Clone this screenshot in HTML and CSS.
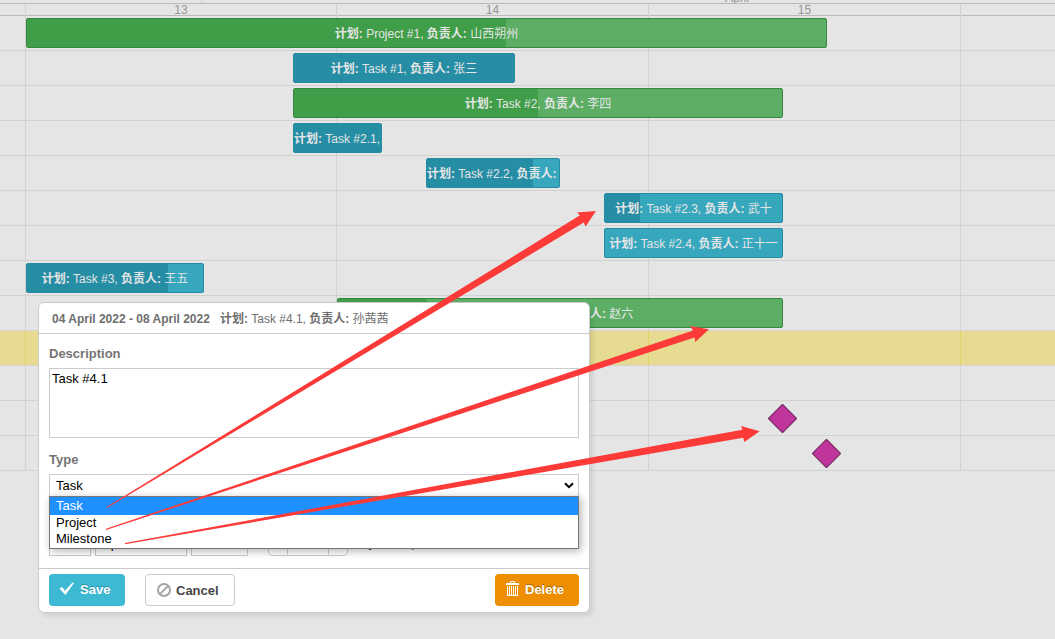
FILE: index.html
```html
<!DOCTYPE html>
<html lang="zh-CN">
<head>
<meta charset="utf-8">
<title>Gantt</title>
<link rel="stylesheet" href="styles.css">
</head>
<body>
<main class="gantt">
  <div class="months"><div class="month"></div><div class="month month-current">April</div></div>
  <div class="days"><div></div><div>13</div><div>14</div><div>15</div><div></div></div>

  <div class="row"><i></i><i></i><i></i><i></i><i></i>
    <div class="bar project" style="left:26px;width:801px"><span class="progress" style="width:479px"></span><span class="text"><b>计划:</b> Project #1, <b>负责人:</b> 山西朔州</span></div></div>
  <div class="row"><i></i><i></i><i></i><i></i><i></i>
    <div class="bar task" style="left:293px;width:222px"><span class="progress" style="width:220px"></span><span class="text"><b>计划:</b> Task #1, <b>负责人:</b> 张三</span></div></div>
  <div class="row"><i></i><i></i><i></i><i></i><i></i>
    <div class="bar project" style="left:293px;width:490px"><span class="progress" style="width:244px"></span><span class="text"><b>计划:</b> Task #2, <b>负责人:</b> 李四</span></div></div>
  <div class="row"><i></i><i></i><i></i><i></i><i></i>
    <div class="bar task clipped" style="left:293px;width:89px"><span class="progress" style="width:87px"></span><span class="text"><b>计划:</b> Task #2.1,</span></div></div>
  <div class="row"><i></i><i></i><i></i><i></i><i></i>
    <div class="bar task clipped" style="left:426px;width:134px"><span class="progress" style="width:106px"></span><span class="text"><b>计划:</b> Task #2.2, <b>负责人:</b></span></div></div>
  <div class="row"><i></i><i></i><i></i><i></i><i></i>
    <div class="bar task" style="left:604px;width:179px"><span class="progress" style="width:35px"></span><span class="text"><b>计划:</b> Task #2.3, <b>负责人:</b> 武十</span></div></div>
  <div class="row"><i></i><i></i><i></i><i></i><i></i>
    <div class="bar task" style="left:604px;width:179px"><span class="text"><b>计划:</b> Task #2.4, <b>负责人:</b> 正十一</span></div></div>
  <div class="row"><i></i><i></i><i></i><i></i><i></i>
    <div class="bar task" style="left:26px;width:178px"><span class="progress" style="width:141px"></span><span class="text"><b>计划:</b> Task #3, <b>负责人:</b> 王五</span></div></div>
  <div class="row"><i></i><i></i><i></i><i></i><i></i>
    <div class="bar project" style="left:337px;width:446px"><span class="progress" style="width:89px"></span><span class="text"><b>计划:</b> Task #4, <b>负责人:</b> 赵六</span></div></div>
  <div class="row selected"><i></i><i></i><i></i><i></i><i></i></div>
  <div class="row"><i></i><i></i><i></i><i></i><i></i></div>
  <div class="row"><i></i><i></i><i></i><i></i><i></i>
    <div class="milestone" style="left:772px"></div></div>
  <div class="row"><i></i><i></i><i></i><i></i><i></i>
    <div class="milestone" style="left:816px"></div></div>
</main>

<form class="lightbox">
  <header class="lb-head"><strong>04 April 2022 - 08 April 2022</strong><span><b>计划:</b> Task #4.1, <b>负责人:</b> 孙茜茜</span></header>
  <div class="lb-body">
    <label class="label" for="desc">Description</label>
    <textarea class="desc" id="desc">Task #4.1</textarea>
    <label class="label label-type" for="type">Type</label>
    <div class="type">
      <select class="field type-select" id="type"><option>Task</option><option>Project</option><option>Milestone</option></select>
      <svg class="chevron" viewBox="0 0 10 7"><path d="M1 1.2 5 5.2 9 1.2" fill="none" stroke="#000" stroke-width="2"/></svg>
      <ul class="options"><li class="active">Task</li><li>Project</li><li>Milestone</li></ul>
    </div>
    <div class="period">
      <select class="field day" aria-label="Day"><option>04</option></select>
      <select class="field mon" aria-label="Month"><option>April</option></select>
      <select class="field year" aria-label="Year"><option>2022</option></select>
      <div class="duration"><button type="button">−</button><input aria-label="Duration" value="4"><button type="button">+</button></div>
      <span class="until">Days 08 April 2022</span>
    </div>
  </div>
  <footer class="lb-foot">
    <button type="button" class="btn save"><svg width="16" height="14" viewBox="0 0 16 14"><path d="M.5 6.500 3 5 6 8.800 13.500 .6 15 1 6.400 13Z" fill="#fff"/></svg>Save</button>
    <button type="button" class="btn cancel"><svg width="14" height="14" viewBox="0 0 14 14"><circle cx="7" cy="7" r="6" fill="none" stroke="#a5a5a5" stroke-width="2"/><path d="M3.4 10.6 10.6 3.4" stroke="#a5a5a5" stroke-width="2"/></svg>Cancel</button>
    <button type="button" class="btn delete"><svg width="14" height="16" viewBox="0 0 14 16"><path d="M4.500 2V.5h4V2" fill="none" stroke="#fff"/><path d="M0 2h13v2H0z" fill="#fff"/><path d="M1.500 5v10M3.500 5v10M5.500 5v10M7.500 5v10M9.500 5v10M11.500 5v10M1 14.500h11" stroke="#fff" fill="none"/></svg>Delete</button>
  </footer>
</form>

<svg class="arrows" width="1055" height="639" viewBox="0 0 1055 639">
  <path d="M107 506.700 580 215.300 577 212.600 596 211 585.600 226.600 583.800 222.600 107 508Z"/>
  <path d="M106 528.800 693 330.500 690 326 709 329.300 695.300 342 694.500 337.500 106 530Z"/>
  <path d="M125 543 742.300 429.700 741 426 759.700 431.300 744.300 442 743.300 437.800 125 544.200Z"/>
</svg>
</body>
</html>
```
FILE: styles.css
```css
* { box-sizing: border-box; }

body {
  margin: 0;
  min-height: 100vh;
  position: relative;
  overflow: hidden;
  background: #e5e5e5;
  font-family: "Liberation Sans", "Noto Sans CJK SC", sans-serif;
  font-size: 12px;
}

/* time scale */
.months {
  display: grid;
  grid-template-columns: 202px 1fr;
  height: 4px;
  overflow: hidden;
  border-bottom: 1px solid #b9b9b9;
  color: #959595;
}
.month { border-right: 1px solid #d0d0d0; height: 3px; }
.month-current {
  display: flex;
  align-items: flex-end;
  padding-left: 523px;
  border-right: 0;
  line-height: 10px;
}
.days, .row {
  display: grid;
  grid-template-columns: 26px 311px 312px 312px 1fr;
}
.days {
  height: 12px;
  border-bottom: 1px solid #b9b9b9;
  color: #959595;
  text-align: center;
  line-height: 12px;
}
.days > div { border-right: 1px solid #d2d2d2; }
.days > div:last-child, .row > i:last-of-type { border-right: 0; }

/* chart rows */
.row {
  position: relative;
  height: 35px;
  border-bottom: 1px solid #d2d2d2;
}
.row > i { border-right: 1px solid #d2d2d2; }
.row.selected { background: #e6db90; }
.row.selected > i { border-color: #e5d264; }

.bar {
  position: absolute;
  top: 2px;
  height: 30px;
  border: 1px solid;
  border-radius: 2px;
  overflow: hidden;
  color: #e5e5e5;
  line-height: 30px;
  text-align: center;
  white-space: nowrap;
}
.bar.clipped { text-align: left; }
.text { position: relative; }
.progress { position: absolute; left: 0; top: 0; bottom: 0; }
.project { background: #5cae64; border-color: #36873f; }
.project .progress { background: #409e49; }
.task { background: #37a7be; border-color: #258ca2; }
.task .progress { background: #258ea5; }
.milestone {
  position: absolute;
  top: 7px;
  width: 21px;
  height: 21px;
  background: #bf359b;
  border: 1px solid #6b2159;
  border-radius: 1px;
  transform: rotate(45deg);
}

/* edit dialog */
.lightbox {
  position: absolute;
  left: 38px;
  top: 302px;
  width: 552px;
  background: #fff;
  border: 1px solid #cbcbcb;
  border-radius: 6px;
  box-shadow: 3px 3px 4px rgba(0, 0, 0, .09);
}
.lb-head {
  display: flex;
  gap: 10px;
  height: 31px;
  padding: 0 13px;
  border-bottom: 1px solid #cbcbcb;
  line-height: 32px;
  color: #6e6e6e;
}
.lb-body { padding: 10px; }
.label {
  display: block;
  height: 24px;
  line-height: 20px;
  font-size: 13px;
  font-weight: bold;
  color: #747473;
}
.desc {
  display: block;
  width: 100%;
  height: 70px;
  padding: 2px;
  border: 1px solid #cbcbcb;
  border-radius: 0;
  font: 13px/16px "Liberation Sans", sans-serif;
  color: #000;
  resize: none;
  outline: 0;
}
.label-type { margin-top: 12px; }
.field {
  appearance: none;
  height: 24px;
  padding: 0 6px 2px;
  background: #fff;
  border: 1px solid #cbcbcb;
  border-radius: 0;
  font: 13px "Liberation Sans", sans-serif;
  color: #000;
}
.type { position: relative; }
.type-select { display: block; width: 100%; }
.chevron { position: absolute; right: 5px; top: 8px; width: 10px; height: 7px; }
.options {
  position: absolute;
  z-index: 1;
  left: 0;
  right: 0;
  top: 22px;
  margin: 0;
  padding: 0;
  list-style: none;
  background: #fff;
  border: 1px solid #767676;
  box-shadow: 2px 2px 8px rgba(0, 0, 0, .3);
  font-size: 13px;
  line-height: 16px;
}
.options li { height: 16px; padding: 0 6px; }
.options .active { height: 18px; line-height: 17px; background: #1e90ff; color: #fff; }
.options li:last-child { height: 17px; }
.period {
  display: flex;
  align-items: center;
  gap: 4px;
  margin-top: 34px;
  font-size: 13px;
  color: #454545;
}
.until { padding-bottom: 4px; }
.day { width: 42px; }
.mon { width: 92px; }
.year { width: 57px; }
.duration { display: flex; height: 24px; margin-left: 16px; }
.duration button, .duration input {
  width: 20px;
  padding: 0;
  background: #fff;
  border: 1px solid #cbcbcb;
  border-radius: 4px 0 0 4px;
  font: 13px "Liberation Sans", sans-serif;
}
.duration input { width: 40px; border-width: 1px 0; border-radius: 0; text-align: center; }
.duration button:last-child { border-radius: 0 4px 4px 0; }
.lb-foot {
  display: flex;
  gap: 20px;
  margin-top: 2px;
  padding: 5px 10px 6px;
  border-top: 1px solid #cbcbcb;
}
.btn {
  display: flex;
  align-items: center;
  gap: 5px;
  height: 32px;
  padding: 0 11px;
  border: 0;
  border-radius: 4px;
  color: #fff;
  font: bold 13px "Liberation Sans", sans-serif;
}
.save { width: 76px; padding: 0 10px 2px; background: #3db9d3; text-shadow: 0 -1px 0 #2c8ea3; }
.cancel { width: 90px; border: 1px solid #cbcbcb; background: #fff; color: #454545; }
.delete { width: 84px; padding-bottom: 2px; margin-left: auto; background: #ed8f00; text-shadow: 0 -1px 0 #a96500; }

.arrows {
  position: absolute;
  z-index: 2;
  left: 0;
  top: 0;
  fill: #fc3a38;
  pointer-events: none;
}
```
